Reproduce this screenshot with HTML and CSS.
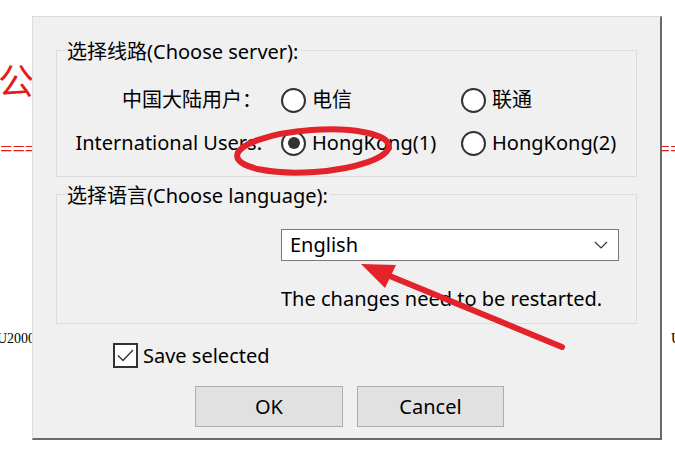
FILE: index.html
```html
<!DOCTYPE html>
<html lang="en">
<head>
    <meta charset="UTF-8">
    <title>选择线路</title>
    <link rel="stylesheet" href="styles.css">
</head>
<body>
    <!-- page behind the dialog -->
    <div class="backdrop">
        <div class="notice">公告：请选择线路</div>
        <div class="divider">==================================================================================================</div>
        <div class="footer-row">
            <span>U2000 客户端</span>
            <span>U2000</span>
        </div>
    </div>

    <div class="dialog">
        <div class="group server-group">
            <div class="group-title">选择线路(Choose server):</div>
            <div class="server-grid">
                <div class="row-label">中国大陆用户：</div>
                <label class="radio"><span class="radio-dot"></span>电信</label>
                <label class="radio"><span class="radio-dot"></span>联通</label>

                <div class="row-label">International Users:</div>
                <label class="radio"><span class="radio-dot checked"></span>HongKong(1)</label>
                <label class="radio"><span class="radio-dot"></span>HongKong(2)</label>
            </div>
        </div>

        <div class="group language-group">
            <div class="group-title">选择语言(Choose language):</div>
            <div class="combo">
                <span>English</span>
                <svg class="chevron" width="14" height="8" viewBox="0 0 14 8">
                    <polyline points="1,1 7,7 13,1" fill="none" stroke="#333" stroke-width="1.2"/>
                </svg>
            </div>
            <div class="hint">The changes need to be restarted.</div>
        </div>

        <label class="check-row">
            <span class="check-box">
                <svg width="21" height="21" viewBox="0 0 21 21">
                    <polyline points="3,10.5 8,15.5 18,5" fill="none" stroke="#333" stroke-width="1.4"/>
                </svg>
            </span>
            Save selected
        </label>

        <div class="buttons">
            <button class="btn btn-ok">OK</button>
            <button class="btn btn-cancel">Cancel</button>
        </div>
    </div>

    <!-- red annotation marks drawn on top of the screenshot -->
    <svg class="marks" width="675" height="459" viewBox="0 0 675 459">
        <ellipse cx="313" cy="151" rx="76" ry="21" transform="rotate(-4 313 151)"
                 fill="none" stroke="#e3232b" stroke-width="6"/>
        <line x1="562" y1="347" x2="380" y2="272" stroke="#e3232b" stroke-width="6" stroke-linecap="round"/>
        <polygon points="361,264 396,265 385,288" fill="#e3232b"/>
    </svg>
</body>
</html>
```

FILE: styles.css
```css
body {
    margin: 0;
    width: 675px;
    height: 459px;
    overflow: hidden;
    background-color: #fff;
    font-family: "Noto Sans", "Noto Sans CJK SC", sans-serif;
    position: relative;
}

/* Page behind the dialog */
.backdrop {
    padding-top: 61px;
    white-space: nowrap;
    overflow: hidden;
}

.notice {
    font-family: "Noto Sans CJK SC", sans-serif;
    font-size: 36px;
    line-height: 36px;
    color: #e31c1c;
    margin-left: -2px;
}

.divider {
    margin-top: 40px;
    font-family: "Liberation Serif", serif;
    font-size: 22px;
    line-height: 24px;
    color: #e31c1c;
    overflow: hidden;
}

.footer-row {
    display: flex;
    justify-content: space-between;
    margin: 169px -34px 0 -3px;
    font-family: "Liberation Serif", "Noto Sans CJK SC", serif;
    font-size: 14px;
    line-height: 18px;
    color: #000;
}

/* Dialog window */
.dialog {
    position: absolute;
    left: 32px;
    top: 16px;
    width: 630px;
    height: 424px;
    box-sizing: border-box;
    background-color: #f0f0f0;
    border-top: 1px solid #dcdcdc;
    border-left: 1px solid #dcdcdc;
    border-right: 2px solid #6a6a6a;
    border-bottom: 2px solid #6a6a6a;
    padding: 33px 23px 0 23px;
    font-size: 20px;
    line-height: 26px;
    color: #000;
}

.group {
    border: 1px solid #dcdcdc;
}

.group-title {
    width: max-content;
    margin: -12px 0 0 8px;
    padding: 0 2px;
    background-color: #f0f0f0;
}

.server-group {
    height: 125px;
}

.server-grid {
    display: grid;
    grid-template-columns: 205px 161px 161px;
    grid-auto-rows: 36px;
    column-gap: 19px;
    row-gap: 7px;
    align-items: center;
    margin-top: 17px;
}

.row-label {
    text-align: right;
    white-space: nowrap;
}

.radio {
    display: flex;
    align-items: center;
    gap: 6px;
    white-space: nowrap;
}

.radio-dot {
    flex: none;
    width: 25px;
    height: 25px;
    box-sizing: border-box;
    border: 2px solid #333;
    border-radius: 50%;
    background-color: #fff;
    display: flex;
    align-items: center;
    justify-content: center;
}

.radio-dot.checked::after {
    content: "";
    width: 12px;
    height: 12px;
    border-radius: 50%;
    background-color: #333;
}

.language-group {
    margin-top: 17px;
    height: 128px;
}

.combo {
    display: flex;
    align-items: center;
    justify-content: space-between;
    width: 338px;
    height: 32px;
    box-sizing: border-box;
    margin: 20px 0 0 224px;
    padding: 0 10px 0 8px;
    background-color: #fff;
    border: 1px solid #7a7a7a;
}

.hint {
    margin: 25px 0 0 224px;
}

.check-row {
    display: flex;
    align-items: center;
    gap: 5px;
    margin: 19px 0 0 57px;
    height: 25px;
}

.check-box {
    width: 25px;
    height: 25px;
    box-sizing: border-box;
    border: 2px solid #333;
    background-color: #fff;
    display: flex;
}

.buttons {
    display: flex;
    gap: 14px;
    margin: 18px 0 0 139px;
}

.btn {
    height: 41px;
    background-color: #e1e1e1;
    border: 1px solid #adadad;
    font-family: inherit;
    font-size: 20px;
    color: #000;
    padding: 0;
}

.btn-ok {
    width: 148px;
}

.btn-cancel {
    width: 147px;
}

/* Annotation overlay */
.marks {
    position: absolute;
    left: 0;
    top: 0;
}
```
